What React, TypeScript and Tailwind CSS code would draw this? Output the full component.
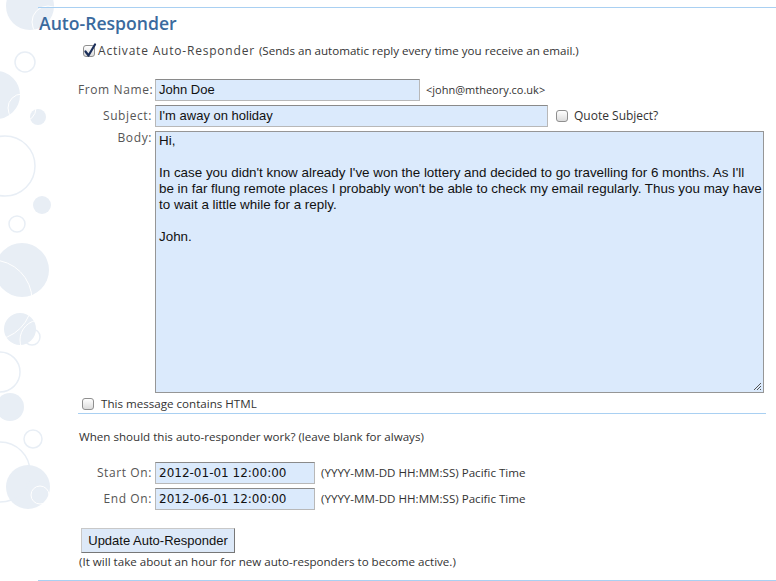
import { ReactNode } from 'react';

const lucida = { fontFamily: '"Open Sans", "DejaVu Sans", sans-serif' };
const dejavu = { fontFamily: '"DejaVu Sans", Verdana, sans-serif' };
const helv = { fontFamily: '"Liberation Sans", Arial, sans-serif' };

function Bubbles() {
  const fill = '#e8eef5';
  return (
    <svg className="absolute left-0 top-0" width="60" height="581" viewBox="0 0 60 581">
      <g fill={fill}>
        <circle cx="30" cy="6" r="24" />
        <circle cx="-4" cy="95" r="24" />
        <circle cx="38" cy="117" r="8" />
        <circle cx="42" cy="205" r="9" />
        <circle cx="22" cy="270" r="27" />
        <circle cx="20" cy="329" r="16" />
        <circle cx="10" cy="407" r="14" />
        <circle cx="28" cy="487" r="22" />
      </g>
      <g fill="none" stroke={fill} strokeWidth="1.5">
        <circle cx="25" cy="62" r="10" />
        <circle cx="5" cy="166" r="30" />
        <circle cx="17" cy="224" r="8" />
        <circle cx="32" cy="337" r="8" />
        <circle cx="0" cy="372" r="20" />
        <circle cx="33" cy="439" r="9" />
        <circle cx="0" cy="472" r="30" />
      </g>
      <g fill="none" stroke="#ffffff" strokeWidth="1">
        <circle cx="48" cy="22" r="16" />
        <circle cx="22" cy="108" r="14" />
        <circle cx="-8" cy="300" r="40" />
        <circle cx="40" cy="340" r="20" />
        <circle cx="40" cy="495" r="9" />
      </g>
    </svg>
  );
}

function Box({ checked }: { checked?: boolean }) {
  return (
    <span className="relative inline-block w-[12px] h-[12px] rounded-[3px] border border-[#8f8f8f] bg-gradient-to-b from-white to-[#dcdcdc] shrink-0">
      {checked && (
        <svg className="absolute -left-[1px] -top-[3px]" width="14" height="15" viewBox="0 0 14 15">
          <path d="M2.5 8.5 L5.5 12.5 L12 1.5" fill="none" stroke="#1c2f5a" strokeWidth="2.2" strokeLinecap="round" strokeLinejoin="round" />
        </svg>
      )}
    </span>
  );
}

function Field({ width, date, children }: { width: string; date?: boolean; children: ReactNode }) {
  return (
    <div
      className={`${width} h-[22px] bg-[#dbeafc] border border-[#b8b8b8] border-t-[#8a8a8a] px-[3px] ${date ? 'text-[12px]' : 'text-[13px]'} leading-[20px] text-[#111] whitespace-nowrap`}
      style={date ? dejavu : helv}
    >
      {children}
    </div>
  );
}

function Label({ children }: { children: ReactNode }) {
  return (
    <div className="text-right text-[12px] tracking-[0.6px] text-[#555] leading-[22px] whitespace-nowrap" style={lucida}>
      {children}
    </div>
  );
}

export default function App() {
  return (
    <div className="relative w-[776px] h-[581px] overflow-hidden bg-white">
      <Bubbles />
      <div className="relative ml-[38px] mt-[7px] border-t border-[#a9d0f2] h-[574px] flex flex-col">
        <h1 className="ml-[1px] mt-[4px] h-[22px] leading-[22px] text-[17.6px] text-[#3a6a9e] font-semibold" style={lucida}>
          Auto-Responder
        </h1>
        <div className="ml-[45px] mt-[10px] flex items-center h-[14px]">
          <Box checked />
          <span className="ml-[3px] text-[12px] tracking-[0.8px] text-[#444]" style={lucida}>
            Activate Auto-Responder
          </span>
          <span className="ml-[4px] text-[11.6px] text-[#333]" style={lucida}>
            (Sends an automatic reply every time you receive an email.)
          </span>
        </div>

        <div className="ml-[40px] mt-[21px] grid grid-cols-[74px_1fr] gap-x-[3px] gap-y-[4px]">
          <Label>From Name:</Label>
          <div className="flex items-center">
            <Field width="w-[265px]">John Doe</Field>
            <span className="ml-[6px] text-[11px] text-[#333]" style={lucida}>
              &lt;john@mtheory.co.uk&gt;
            </span>
          </div>
          <Label>Subject:</Label>
          <div className="flex items-center">
            <Field width="w-[393px]">I'm away on holiday</Field>
            <span className="ml-[8px] flex items-center">
              <Box />
              <span className="ml-[6px] text-[12px] text-[#333]" style={lucida}>
                Quote Subject?
              </span>
            </span>
          </div>
          <div className="text-right text-[12px] tracking-[0.6px] text-[#555] leading-[14px]" style={lucida}>
            Body:
          </div>
          <div
            className="relative w-[609px] h-[262px] bg-[#dbeafc] border border-[#969696] px-[3px] pt-[1px] text-[13.4px] leading-[16px] text-[#111] whitespace-nowrap overflow-hidden"
            style={helv}
          >
            <p>Hi,</p>
            <p className="mt-[16px]">
              In case you didn't know already I've won the lottery and decided to go travelling for 6 months. As I'll
              <br />
              be in far flung remote places I probably won't be able to check my email regularly. Thus you may have
              <br />
              to wait a little while for a reply.
            </p>
            <p className="mt-[16px]">John.</p>
            <svg className="absolute right-[1px] bottom-[1px]" width="9" height="9" viewBox="0 0 9 9">
              <path d="M1 8 L8 1 M4 8 L8 4 M7 8 L8 7" stroke="#555" strokeWidth="1" />
            </svg>
          </div>
        </div>

        <div className="ml-[44px] mt-[5px] flex items-center h-[12px]">
          <Box />
          <span className="ml-[7px] text-[11.6px] text-[#333]" style={lucida}>
            This message contains HTML
          </span>
        </div>
        <div className="ml-[40px] mr-[10px] mt-[3px] border-t border-[#a9d0f2]" />

        <div className="ml-[41px] mt-[16px] text-[11.6px] leading-[14px] text-[#333]" style={lucida}>
          When should this auto-responder work? (leave blank for always)
        </div>

        <div className="ml-[40px] mt-[18px] grid grid-cols-[74px_1fr] gap-x-[3px] gap-y-[4px]">
          <Label>Start On:</Label>
          <div className="flex items-center">
            <Field width="w-[160px]" date>
              2012-01-01 12:00:00
            </Field>
            <span className="ml-[6px] text-[11.6px] text-[#333]" style={lucida}>
              (YYYY-MM-DD HH:MM:SS) Pacific Time
            </span>
          </div>
          <Label>End On:</Label>
          <div className="flex items-center">
            <Field width="w-[160px]" date>
              2012-06-01 12:00:00
            </Field>
            <span className="ml-[6px] text-[11.6px] text-[#333]" style={lucida}>
              (YYYY-MM-DD HH:MM:SS) Pacific Time
            </span>
          </div>
        </div>

        <button
          className="ml-[43px] mt-[18px] w-[154px] h-[25px] bg-[#dde9f8] border border-[#c8c8c8] border-r-[#777] border-b-[#777] text-[13px] text-[#111] text-center"
          style={helv}
        >
          Update Auto-Responder
        </button>
        <div className="ml-[41px] mt-[2px] text-[11.6px] leading-[14px] text-[#333]" style={lucida}>
          (It will take about an hour for new auto-responders to become active.)
        </div>
        <div className="mt-auto border-t border-[#a9d0f2]" />
      </div>
    </div>
  );
}
